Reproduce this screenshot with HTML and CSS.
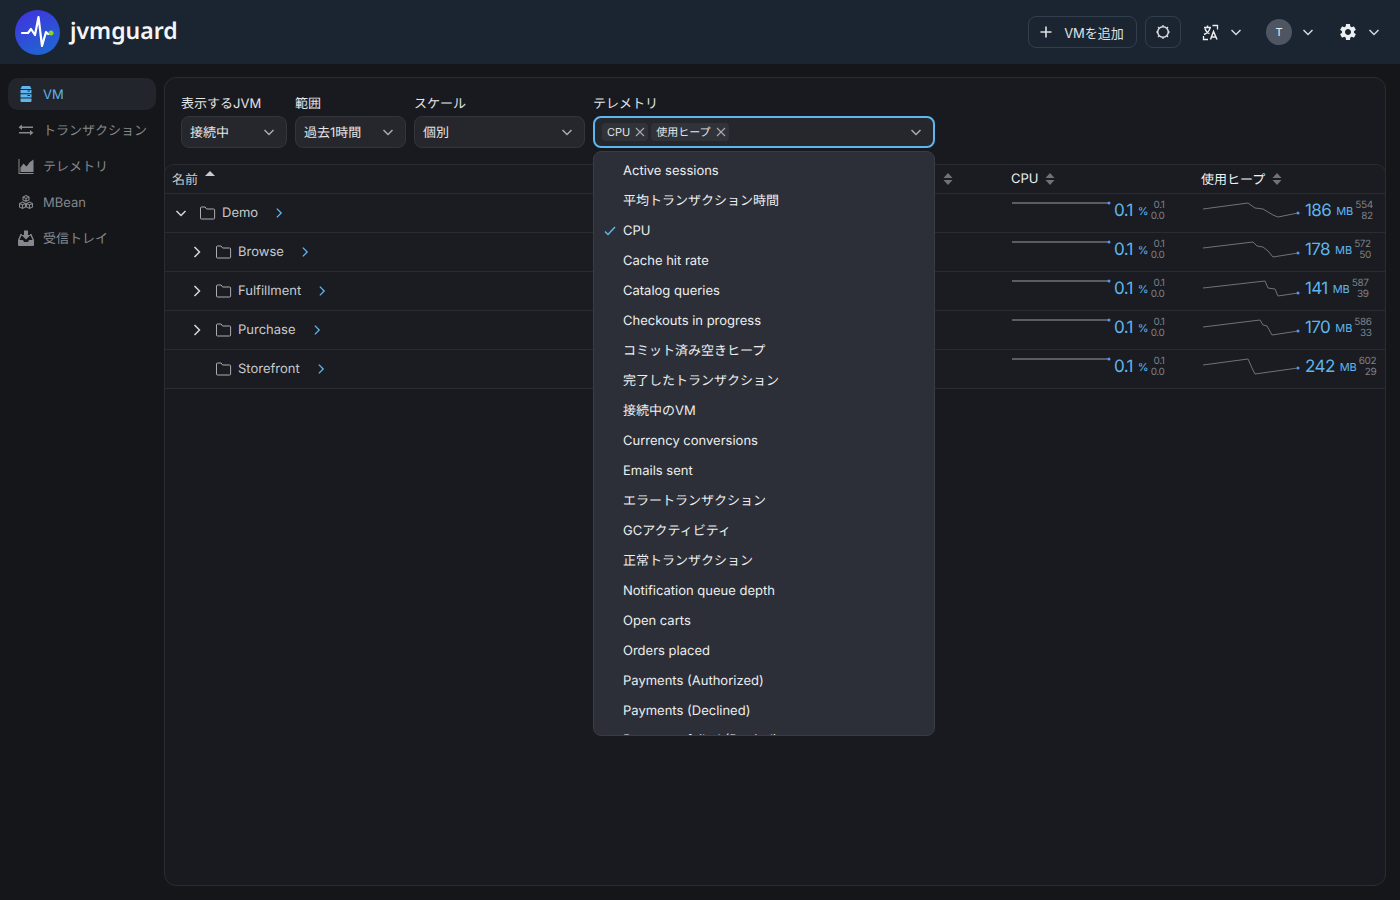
FILE: index.html
```html
<!DOCTYPE html>
<html lang="ja">
<head>
    <meta charset="UTF-8">
    <title>jvmguard</title>
    <link rel="stylesheet" href="styles.css">
</head>
<body>
    <svg class="sprites" width="0" height="0">
        <symbol id="i-chevron-down" viewBox="0 0 16 16"><path d="M3.5 6l4.5 4.5L12.5 6" fill="none" stroke="currentColor" stroke-width="1.5"/></symbol>
        <symbol id="i-chevron-right" viewBox="0 0 16 16"><path d="M5.5 3l5 5-5 5" fill="none" stroke="currentColor" stroke-width="1.5"/></symbol>
        <symbol id="i-folder" viewBox="0 0 16 16"><path d="M1.500 2h3.600l1.500 2h7a1 1 0 0 1 1 1v8a1 1 0 0 1-1 1H1.500a1 1 0 0 1-1-1V3a1 1 0 0 1 1-1z" fill="none" stroke="currentColor" stroke-width="1"/></symbol>
        <symbol id="i-x" viewBox="0 0 12 12"><path d="M2 2l8 8M10 2l-8 8" fill="none" stroke="currentColor" stroke-width="1.100"/></symbol>
        <symbol id="i-sort" viewBox="0 0 10 14"><path d="M5 1l4.500 5h-9zM5 13l4.500-5h-9z" fill="currentColor"/></symbol>
        <symbol id="i-gear" viewBox="0 0 24 24"><path fill="currentColor" d="M19.14,12.94c0.04-0.3,0.06-0.61,0.06-0.94c0-0.32-0.02-0.64-0.07-0.94l2.03-1.58c0.18-0.14,0.23-0.41,0.12-0.61 l-1.92-3.32c-0.12-0.22-0.37-0.29-0.59-0.22l-2.39,0.96c-0.5-0.38-1.03-0.7-1.62-0.94L14.4,2.81c-0.04-0.24-0.24-0.41-0.48-0.41 h-3.84c-0.24,0-0.43,0.17-0.47,0.41L9.25,5.35C8.66,5.59,8.12,5.92,7.63,6.29L5.24,5.33c-0.22-0.08-0.47,0-0.59,0.22L2.74,8.87 C2.62,9.08,2.66,9.34,2.86,9.48l2.03,1.58C4.84,11.36,4.8,11.69,4.8,12s0.02,0.64,0.07,0.94l-2.03,1.58 c-0.18,0.14-0.23,0.41-0.12,0.61l1.92,3.32c0.12,0.22,0.37,0.29,0.59,0.22l2.39-0.96c0.5,0.38,1.03,0.7,1.62,0.94l0.36,2.54 c0.05,0.24,0.24,0.41,0.48,0.41h3.84c0.24,0,0.44-0.17,0.47-0.41l0.36-2.54c0.59-0.24,1.13-0.56,1.62-0.94l2.39,0.96 c0.22,0.08,0.47,0,0.59-0.22l1.92-3.32c0.12-0.22,0.07-0.47-0.12-0.61L19.14,12.94z M12,15.6c-1.98,0-3.6-1.62-3.6-3.6 s1.62-3.6,3.6-3.6s3.6,1.62,3.6,3.6S13.98,15.6,12,15.6z"/></symbol>
        <symbol id="i-flat" viewBox="0 0 100 24"><path d="M1 2H98" fill="none" stroke="#6f7278" stroke-width="1.500"/><circle cx="98" cy="2" r="1.500" fill="#5b93f0"/></symbol>
    </svg>

    <header class="topbar">
        <div class="brand">
            <svg class="brand-logo" viewBox="0 0 45 45">
                <defs>
                    <linearGradient id="logo-grad" x1="0.2" y1="0" x2="0.7" y2="1">
                        <stop offset="0" stop-color="#4034df"/>
                        <stop offset="1" stop-color="#1f66d1"/>
                    </linearGradient>
                </defs>
                <circle cx="22.500" cy="22.500" r="22.500" fill="url(#logo-grad)"/>
                <path d="M7 23h6l3-4 4 6 3.500-18 3.500 29 4-14 2 2h3" fill="none" stroke="#fff" stroke-width="2.200" stroke-linejoin="round" stroke-linecap="round"/>
                <circle cx="36" cy="23" r="2.500" fill="#8bd42a"/>
            </svg>
            <span class="brand-name">jvmguard</span>
        </div>
        <div class="topbar-actions">
            <button class="btn-outline btn-add">
                <svg width="14" height="14" viewBox="0 0 14 14"><path d="M7 1.500v11M1.500 7h11" stroke="currentColor" stroke-width="1.600"/></svg>
                <span>VMを追加</span>
            </button>
            <button class="btn-outline btn-theme">
                <svg width="16" height="16" viewBox="0 0 16 16"><circle cx="8" cy="8" r="5.300" fill="none" stroke="currentColor" stroke-width="1.500"/><path d="M8 1v1.500M8 13.500V15M1 8h1.500M13.500 8H15M3 3l1 1M12 12l1 1M3 13l1-1M12 4l1-1" stroke="currentColor" stroke-width="1.200"/></svg>
            </button>
            <div class="menu-toggle menu-lang">
                <svg width="17" height="17" viewBox="0 0 17 17" fill="none" stroke="currentColor" stroke-width="1.500"><path d="M2 3.500h7M5.500 1.500v2M8 4c-.5 3-2.500 5-6 6.500M3 4.500c.8 2.500 2.700 4.500 4.500 5"/><path d="M8.500 15.500l3-8 3.500 8M9.500 13h5"/><path d="M1.500 12v3.500h4.500M10.500 1.500h5v4" stroke-width="1.300"/></svg>
                <svg class="chev"><use href="#i-chevron-down"/></svg>
            </div>
            <div class="menu-toggle menu-user">
                <span class="avatar">T</span>
                <svg class="chev"><use href="#i-chevron-down"/></svg>
            </div>
            <div class="menu-toggle menu-admin">
                <svg width="20" height="20"><use href="#i-gear"/></svg>
                <svg class="chev"><use href="#i-chevron-down"/></svg>
            </div>
        </div>
    </header>

    <div class="layout">
        <nav class="sidebar">
            <a class="nav-item active">
                <svg width="16" height="16" viewBox="0 0 14 16" fill="currentColor"><path d="M3 0h8l1.500 3h-11zM1.500 4h11v3.200h-11zM1.500 8.200h11v3.300h-11zM1.500 12.500h11V15a1 1 0 0 1-1 1h-9a1 1 0 0 1-1-1z"/><path d="M8.500 9.500h2.500M8.500 5h2.500" stroke="#20232a"/></svg>
                <span class="latin">VM</span>
            </a>
            <a class="nav-item">
                <svg width="16" height="16" viewBox="0 0 16 16" fill="currentColor"><path d="M4 2.500v2H15V6H4v2L.5 5.200zM12 8v2H1v1.500h11v2l3.500-2.800z"/></svg>
                <span class="ja">トランザクション</span>
            </a>
            <a class="nav-item">
                <svg width="16" height="16" viewBox="0 0 16 16" fill="currentColor"><path d="M.5 1h1v14h14v1H.5z"/><path d="M2.500 14v-4.500l3-4 3 3L12 4l3.500-2.500V14z"/></svg>
                <span class="ja">テレメトリ</span>
            </a>
            <a class="nav-item">
                <svg width="16" height="16" viewBox="0 0 16 16" fill="none" stroke="currentColor" stroke-width="1.100"><path d="M8 1.500l3 1.500v3L8 7.500 5 6V3zM5 3l3 1.500L11 3M8 4.500V7.500"/><path d="M4.500 8l3 1.500v3.500l-3 1.500-3-1.500V9.500zM1.500 9.500l3 1.500 3-1.500M4.500 11v3.500"/><path d="M11.500 8l3 1.500v3.500l-3 1.500-3-1.500V9.500zM8.500 9.500l3 1.500 3-1.500M11.500 11v3.500"/></svg>
                <span class="latin">MBean</span>
            </a>
            <a class="nav-item">
                <svg width="16" height="16" viewBox="0 0 16 16" fill="currentColor"><path d="M6 .5h4V5h2.500L8 9.500 3.500 5H6z"/><path d="M2.500 4H4v1.500H3.500L1.500 10H5l1 2h4l1-2h3.500l-2-4.500H12V4h1.500l2.500 6v5a1 1 0 0 1-1 1H1a1 1 0 0 1-1-1v-5z"/></svg>
                <span class="ja">受信トレイ</span>
            </a>
        </nav>

        <main class="panel">
            <div class="filters">
                <div class="field">
                    <label>表示するJVM</label>
                    <div class="select select-jvm"><span>接続中</span><svg class="chev"><use href="#i-chevron-down"/></svg></div>
                </div>
                <div class="field">
                    <label>範囲</label>
                    <div class="select select-range"><span>過去1時間</span><svg class="chev"><use href="#i-chevron-down"/></svg></div>
                </div>
                <div class="field">
                    <label>スケール</label>
                    <div class="select select-scale"><span>個別</span><svg class="chev"><use href="#i-chevron-down"/></svg></div>
                </div>
                <div class="field field-telemetry">
                    <label>テレメトリ</label>
                    <div class="select select-multi">
                        <span class="pill">CPU<svg><use href="#i-x"/></svg></span>
                        <span class="pill">使用ヒープ<svg><use href="#i-x"/></svg></span>
                        <svg class="chev chev-end"><use href="#i-chevron-down"/></svg>
                    </div>
                    <ul class="dropdown">
                        <li>Active sessions</li>
                        <li>平均トランザクション時間</li>
                        <li class="checked"><svg width="14" height="14" viewBox="0 0 14 14"><path d="M2 7.500l3 3 7-7.500" fill="none" stroke="currentColor" stroke-width="1.500"/></svg>CPU</li>
                        <li>Cache hit rate</li>
                        <li>Catalog queries</li>
                        <li>Checkouts in progress</li>
                        <li>コミット済み空きヒープ</li>
                        <li>完了したトランザクション</li>
                        <li>接続中のVM</li>
                        <li>Currency conversions</li>
                        <li>Emails sent</li>
                        <li>エラートランザクション</li>
                        <li>GCアクティビティ</li>
                        <li>正常トランザクション</li>
                        <li>Notification queue depth</li>
                        <li>Open carts</li>
                        <li>Orders placed</li>
                        <li>Payments (Authorized)</li>
                        <li>Payments (Declined)</li>
                        <li>Payments failed (Retried)</li>
                    </ul>
                </div>
            </div>

            <div class="grid">
                <div class="grid-row grid-head">
                    <div class="cell-name"><span>名前</span><svg class="sort-up" width="10" height="5" viewBox="0 0 10 5"><path d="M5 0l5 5H0z" fill="currentColor"/></svg></div>
                    <div class="cell-hidden"><svg class="sort"><use href="#i-sort"/></svg></div>
                    <div class="cell-cpu"><span>CPU</span><svg class="sort"><use href="#i-sort"/></svg></div>
                    <div class="cell-heap"><span>使用ヒープ</span><svg class="sort"><use href="#i-sort"/></svg></div>
                </div>

                <div class="grid-row">
                    <div class="cell-name depth-0">
                        <svg class="tree-toggle"><use href="#i-chevron-down"/></svg>
                        <svg class="folder"><use href="#i-folder"/></svg>
                        <span>Demo</span>
                        <svg class="drill"><use href="#i-chevron-right"/></svg>
                    </div>
                    <div></div>
                    <div class="metric metric-cpu">
                        <svg class="spark"><use href="#i-flat"/></svg>
                        <span class="value">0.1</span><span class="unit">%</span>
                        <span class="range"><span>0.1</span><span>0.0</span></span>
                    </div>
                    <div class="metric metric-heap">
                        <svg class="spark" viewBox="0 0 100 24"><polyline points="1,8 46,2 53,7 61,8 71,14 76,16 96,12"/><circle cx="96" cy="12" r="1.500"/></svg>
                        <span class="value">186</span><span class="unit">MB</span>
                        <span class="range"><span>554</span><span>82</span></span>
                    </div>
                </div>

                <div class="grid-row">
                    <div class="cell-name depth-1">
                        <svg class="tree-toggle"><use href="#i-chevron-right"/></svg>
                        <svg class="folder"><use href="#i-folder"/></svg>
                        <span>Browse</span>
                        <svg class="drill"><use href="#i-chevron-right"/></svg>
                    </div>
                    <div></div>
                    <div class="metric metric-cpu">
                        <svg class="spark"><use href="#i-flat"/></svg>
                        <span class="value">0.1</span><span class="unit">%</span>
                        <span class="range"><span>0.1</span><span>0.0</span></span>
                    </div>
                    <div class="metric metric-heap">
                        <svg class="spark" viewBox="0 0 100 24"><polyline points="1,8 51,2 55,6 61,7 66,11 71,17 96,13"/><circle cx="96" cy="13" r="1.500"/></svg>
                        <span class="value">178</span><span class="unit">MB</span>
                        <span class="range"><span>572</span><span>50</span></span>
                    </div>
                </div>

                <div class="grid-row">
                    <div class="cell-name depth-1">
                        <svg class="tree-toggle"><use href="#i-chevron-right"/></svg>
                        <svg class="folder"><use href="#i-folder"/></svg>
                        <span>Fulfillment</span>
                        <svg class="drill"><use href="#i-chevron-right"/></svg>
                    </div>
                    <div></div>
                    <div class="metric metric-cpu">
                        <svg class="spark"><use href="#i-flat"/></svg>
                        <span class="value">0.1</span><span class="unit">%</span>
                        <span class="range"><span>0.1</span><span>0.0</span></span>
                    </div>
                    <div class="metric metric-heap">
                        <svg class="spark" viewBox="0 0 100 24"><polyline points="1,9 63,2 66,9 73,10 76,17 96,14"/><circle cx="96" cy="14" r="1.500"/></svg>
                        <span class="value">141</span><span class="unit">MB</span>
                        <span class="range"><span>587</span><span>39</span></span>
                    </div>
                </div>

                <div class="grid-row">
                    <div class="cell-name depth-1">
                        <svg class="tree-toggle"><use href="#i-chevron-right"/></svg>
                        <svg class="folder"><use href="#i-folder"/></svg>
                        <span>Purchase</span>
                        <svg class="drill"><use href="#i-chevron-right"/></svg>
                    </div>
                    <div></div>
                    <div class="metric metric-cpu">
                        <svg class="spark"><use href="#i-flat"/></svg>
                        <span class="value">0.1</span><span class="unit">%</span>
                        <span class="range"><span>0.1</span><span>0.0</span></span>
                    </div>
                    <div class="metric metric-heap">
                        <svg class="spark" viewBox="0 0 100 24"><polyline points="1,9 58,2 61,7 65,8 70,17 96,13"/><circle cx="96" cy="13" r="1.500"/></svg>
                        <span class="value">170</span><span class="unit">MB</span>
                        <span class="range"><span>586</span><span>33</span></span>
                    </div>
                </div>

                <div class="grid-row">
                    <div class="cell-name depth-1">
                        <span class="tree-spacer"></span>
                        <svg class="folder"><use href="#i-folder"/></svg>
                        <span>Storefront</span>
                        <svg class="drill"><use href="#i-chevron-right"/></svg>
                    </div>
                    <div></div>
                    <div class="metric metric-cpu">
                        <svg class="spark"><use href="#i-flat"/></svg>
                        <span class="value">0.1</span><span class="unit">%</span>
                        <span class="range"><span>0.1</span><span>0.0</span></span>
                    </div>
                    <div class="metric metric-heap">
                        <svg class="spark" viewBox="0 0 100 24"><polyline points="1,8 46,2 50,11 53,17 96,11"/><circle cx="96" cy="11" r="1.500"/></svg>
                        <span class="value">242</span><span class="unit">MB</span>
                        <span class="range"><span>602</span><span>29</span></span>
                    </div>
                </div>
            </div>
        </main>
    </div>
</body>
</html>
```

FILE: styles.css
```css
* {
    margin: 0;
    padding: 0;
    box-sizing: border-box;
}

body {
    font-family: Inter, "Noto Sans CJK JP", sans-serif;
    font-size: 13px;
    text-rendering: geometricPrecision;
    background-color: #141619;
    color: #e4e5e7;
    height: 100vh;
    overflow: hidden;
    display: flex;
    flex-direction: column;
}

.sprites {
    position: absolute;
}

.chev {
    width: 16px;
    height: 16px;
    color: #a9acb2;
    flex-shrink: 0;
}

/* top bar */

.topbar {
    height: 64px;
    flex-shrink: 0;
    background: #1b2532;
    display: flex;
    align-items: center;
    justify-content: space-between;
    padding: 0 18px 0 15px;
}

.brand {
    display: flex;
    align-items: center;
    gap: 10px;
    margin-top: 1px;
}

.brand-logo {
    width: 45px;
    height: 45px;
}

.brand-name {
    font-family: "Noto Sans", sans-serif;
    font-size: 23px;
    font-weight: 600;
    color: #f4f5f6;
    margin-top: -6px;
}

.topbar-actions {
    display: flex;
    align-items: center;
}

.btn-outline {
    height: 32px;
    background: transparent;
    border: 1px solid #333e4c;
    border-radius: 8px;
    color: #dfe1e4;
    font: inherit;
    display: flex;
    align-items: center;
    justify-content: center;
}

.btn-add {
    width: 109px;
    gap: 11px;
    padding-right: 2px;
}

.btn-theme {
    width: 36px;
    margin-left: 8px;
}

.menu-toggle {
    display: flex;
    align-items: center;
    color: #eceef0;
}

.menu-toggle .chev {
    color: #d5d7da;
}

.menu-lang {
    margin-left: 21px;
    gap: 9px;
}

.menu-user {
    margin-left: 22px;
    gap: 8px;
}

.menu-admin {
    margin-left: 22px;
    gap: 8px;
}

.avatar {
    width: 26px;
    height: 26px;
    border-radius: 50%;
    background: #4f5663;
    font-size: 11px;
    display: flex;
    align-items: center;
    justify-content: center;
}

/* layout */

.layout {
    flex-grow: 1;
    display: flex;
    min-height: 0;
    padding: 13px 14px 14px 8px;
    gap: 8px;
}

.sidebar {
    width: 148px;
    flex-shrink: 0;
    padding-top: 1px;
}

.nav-item {
    height: 32px;
    margin-bottom: 4px;
    padding-left: 10px;
    display: flex;
    align-items: center;
    gap: 9px;
    border-radius: 10px;
    color: #85888e;
}

.nav-item svg {
    flex-shrink: 0;
}

.nav-item .ja {
    padding-bottom: 1px;
}

.nav-item .latin {
    padding-top: 1px;
}

.nav-item.active {
    background: #22252c;
    color: #5fb6ee;
}

.panel {
    flex-grow: 1;
    min-width: 0;
    background: #181a1f;
    border: 1px solid #2a2c31;
    border-radius: 12px;
    display: flex;
    flex-direction: column;
}

/* filters */

.filters {
    display: flex;
    gap: 8px;
    padding: 17px 0 16px 16px;
}

.field {
    position: relative;
}

.field label {
    display: block;
    height: 21px;
    line-height: 19px;
}

.select {
    height: 32px;
    background: #25272c;
    border: 1px solid #33353b;
    border-radius: 8px;
    display: flex;
    align-items: center;
    justify-content: space-between;
    padding: 0 9px 0 8px;
}

.select > span:not(.pill) {
    padding-bottom: 1px;
}

.select-jvm {
    width: 106px;
}

.select-range {
    width: 111px;
}

.select-scale {
    width: 171px;
}

.select-multi {
    width: 342px;
    border: 2px solid #5fb6ee;
    justify-content: flex-start;
    padding-left: 7px;
    gap: 3px;
}

.chev-end {
    margin-left: auto;
}

.pill {
    height: 18px;
    padding: 0 2px 0 5px;
    background: #30333a;
    border-radius: 4px;
    font-size: 11px;
    display: flex;
    align-items: center;
    gap: 4px;
}

.pill svg {
    width: 12px;
    height: 12px;
    color: #a9acb2;
}

.dropdown {
    position: absolute;
    top: 56px;
    left: 0;
    width: 342px;
    height: 585px;
    overflow: hidden;
    list-style: none;
    background: #2c2f37;
    border: 1px solid #393c44;
    border-radius: 8px;
    padding-top: 4px;
    z-index: 10;
}

.dropdown li {
    position: relative;
    height: 30px;
    line-height: 30px;
    padding-left: 29px;
    color: #eceef0;
}

.dropdown li:last-child {
    margin-top: -1px;
}

.dropdown li svg {
    position: absolute;
    left: 9px;
    top: 8px;
    color: #5fb6ee;
}

/* table */

.grid {
    margin: 0 -1px;
    border: 1px solid #2a2c31;
    border-bottom: none;
    border-radius: 10px 10px 0 0;
    overflow: hidden;
}

.grid-row {
    height: 39px;
    display: grid;
    grid-template-columns: 1fr 70px 190px 185px;
    align-items: center;
    border-bottom: 1px solid #2a2c31;
    background: #1a1c21;
}

.grid-head {
    height: 29px;
    color: #eef0f2;
}

.grid-head > div {
    display: flex;
    align-items: center;
}

.grid-head .cell-name {
    padding-left: 7px;
}

.grid-head .cell-name > span,
.grid-head .cell-heap > span {
    padding-bottom: 2px;
}

.grid-head .cell-cpu,
.grid-head .cell-heap {
    padding-left: 1px;
}

.sort-up {
    margin: -12px 0 0 7px;
    color: #c9cbce;
}

.sort {
    width: 10px;
    height: 14px;
    margin-left: 7px;
    color: #6f7278;
}

.cell-hidden .sort {
    margin-left: 3px;
}

.cell-name {
    display: flex;
    align-items: center;
    color: #c8cacd;
}

.cell-name > span {
    padding-bottom: 1px;
}

.depth-0 {
    padding-left: 8px;
}

.depth-1 {
    padding-left: 24px;
}

.tree-toggle,
.tree-spacer {
    width: 16px;
    height: 16px;
    color: #d5d7da;
    margin-right: 11px;
}

.folder {
    width: 16px;
    height: 16px;
    margin-right: 6px;
    color: #a9acb2;
}

.drill {
    width: 14px;
    height: 14px;
    margin-left: 14px;
    color: #5fb6ee;
}

.metric {
    display: flex;
    align-items: center;
    height: 100%;
    color: #5fb6ee;
}

.metric-cpu {
    padding-left: 1px;
}

.metric-heap {
    padding-left: 2px;
}

.spark {
    width: 100px;
    height: 24px;
    flex-shrink: 0;
}

.spark polyline {
    fill: none;
    stroke: #6f7278;
    stroke-width: 1;
}

.spark circle {
    fill: #5b93f0;
}

.value {
    font-size: 17px;
    margin-left: 3px;
    padding-bottom: 5px;
    letter-spacing: -0.6px;
}

.unit {
    font-size: 11px;
    margin-left: 5px;
    padding-bottom: 4px;
}

.range {
    display: flex;
    flex-direction: column;
    align-items: flex-end;
    margin-left: 2px;
    font-size: 10px;
    line-height: 11px;
    color: #7e8187;
    padding-bottom: 4px;
    letter-spacing: -0.4px;
}
```
